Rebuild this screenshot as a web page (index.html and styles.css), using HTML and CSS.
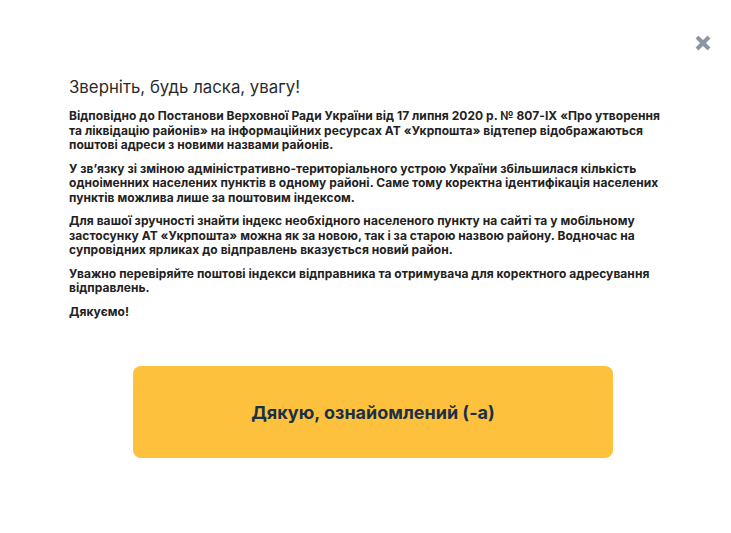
FILE: index.html
```html
<!DOCTYPE html>
<html lang="uk">
<head>
  <meta charset="UTF-8">
  <meta name="viewport" content="width=device-width, initial-scale=1.0">
  <title>Укрпошта</title>
  <link rel="stylesheet" href="styles.css">
</head>
<body>
  <!-- Modal -->
  <div class="modal">
    <button class="modal-close" type="button" aria-label="Закрити">
      <svg width="18" height="18" viewBox="0 0 18 18">
        <path d="M3 3 L15 15 M15 3 L3 15" stroke="#8c96a0" stroke-width="4" stroke-linecap="butt"/>
      </svg>
    </button>

    <div class="modal-content">
      <h2 class="modal-title">Зверніть, будь ласка, увагу!</h2>
      <p>Відповідно до Постанови Верховної Ради України від 17 липня 2020 р. № 807-IX «Про утворення та ліквідацію районів» на інформаційних ресурсах АТ «Укрпошта» відтепер відображаються поштові адреси з новими назвами районів.</p>
      <p>У зв’язку зі зміною адміністративно-територіального устрою України збільшилася кількість одноіменних населених пунктів в одному районі. Саме тому коректна ідентифікація населених пунктів можлива лише за поштовим індексом.</p>
      <p>Для вашої зручності знайти індекс необхідного населеного пункту на сайті та у мобільному застосунку АТ «Укрпошта» можна як за новою, так і за старою назвою району. Водночас на супровідних ярликах до відправлень вказується новий район.</p>
      <p>Уважно перевіряйте поштові індекси відправника та отримувача для коректного адресування відправлень.</p>
      <p>Дякуємо!</p>
    </div>

    <div class="modal-actions">
      <button class="btn-confirm" type="button">Дякую, ознайомлений (-а)</button>
    </div>
  </div>
</body>
</html>
```

FILE: styles.css
```css
body {
  margin: 0;
  font-family: Inter, "Noto Sans", sans-serif;
  background: #fff;
  color: #222;
}

.modal {
  width: 731px;
  height: 533px;
  box-sizing: border-box;
  padding: 77px 62px 0 69px;
}

.modal-close {
  position: absolute;
  top: 34px;
  right: 19px;
  padding: 0;
  border: 0;
  background: none;
  cursor: pointer;
}

.modal-title {
  margin: 0 0 12px;
  font-size: 16.8px;
  font-weight: 400;
  color: #2b2b2b;
}

.modal-content p {
  margin: 0 0 9px;
  font-size: 12px;
  line-height: 14.5px;
  font-weight: 700;
  letter-spacing: 0.05px;
  color: #222;
}

.modal-actions {
  margin-top: 47px;
  padding-left: 64px;
}

.btn-confirm {
  width: 480px;
  height: 92px;
  border: 0;
  border-radius: 8px;
  background: #fdc13d;
  color: #1b3047;
  font-family: inherit;
  font-size: 18px;
  font-weight: 700;
  cursor: pointer;
}
```
